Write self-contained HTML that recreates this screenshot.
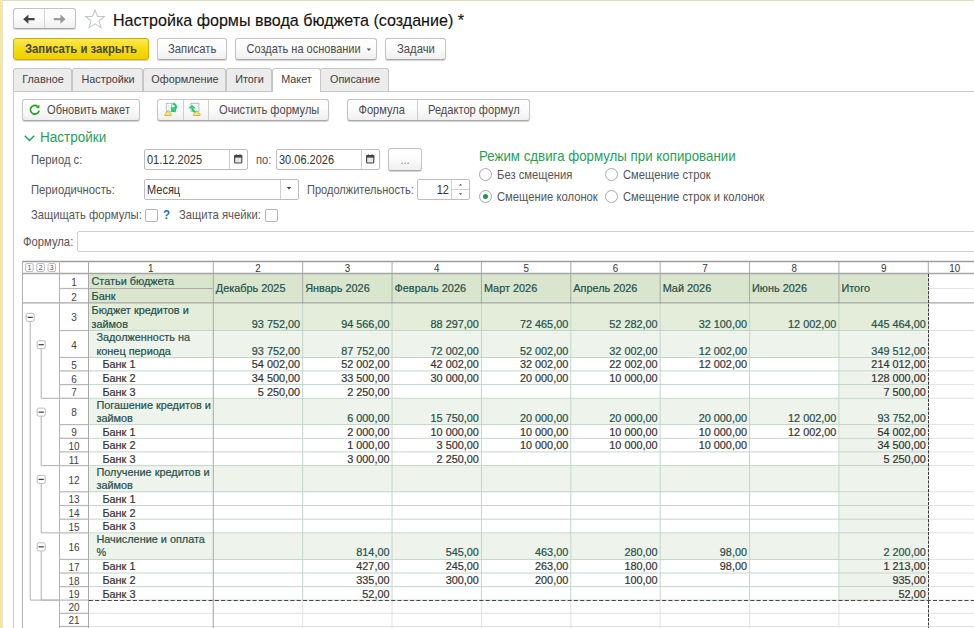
<!DOCTYPE html><html><head><meta charset="utf-8"><style>
*{margin:0;padding:0;box-sizing:border-box}
html,body{width:974px;height:628px;overflow:hidden;background:#fff}
body{position:relative;font-family:"Liberation Sans",sans-serif;font-size:11px;color:#333}
.a{position:absolute}
.t{position:absolute;white-space:nowrap;line-height:1;transform:scaleY(1.08);transform-origin:0 88%}
.btn{position:absolute;border:1px solid #c4c4c4;border-bottom-color:#a8a8a8;border-radius:3px;
 background:linear-gradient(#fff,#fcfcfc 45%,#efefef);box-shadow:0 1px 1px rgba(0,0,0,.18)}
.tab{position:absolute;top:68px;height:23px;border:1px solid #c6c6c6;border-bottom:none;border-radius:3px 3px 0 0;background:#ececec}
.fld{position:absolute;border:1px solid #bdbdbd;border-radius:2px;background:#fff}
.lbl{color:#555;font-size:11.25px}
.cb{position:absolute;width:13px;height:13px;border:1px solid #b4b4b4;border-radius:2px;background:#fff}
.rad{position:absolute;width:13px;height:13px;border:1px solid #a9a9a9;border-radius:50%;background:#fff}
</style></head><body>
<div class="a" style="left:0;top:0;width:974px;height:1px;background:#e6dcb8"></div>
<div class="a" style="left:0;top:0;width:2px;height:628px;background:#f6e8a0"></div>
<div class="a" style="left:2px;top:2px;width:1px;height:626px;background:#ece3c4"></div>
<div class="btn" style="left:13px;top:8px;width:63px;height:21px"></div>
<div class="a" style="left:44px;top:9px;width:1px;height:19px;background:#d4d4d4"></div>
<svg class="a" style="left:22px;top:13px" width="14" height="12" viewBox="0 0 14 12"><path d="M1.2 6.2 L6.4 1.6 L6.4 5.0 L12.6 5.0 L12.6 7.3 L6.4 7.3 L6.4 10.8 Z" fill="#444"/></svg>
<svg class="a" style="left:53px;top:13px" width="14" height="12" viewBox="0 0 14 12"><path d="M12.6 6.2 L7.4 1.6 L7.4 5.0 L0.8 5.0 L0.8 7.3 L7.4 7.3 L7.4 10.8 Z" fill="#9a9a9a"/></svg>
<svg class="a" style="left:84px;top:9px" width="22" height="20" viewBox="0 0 22 20"><path d="M11 1.2 L13.6 7.4 L20.3 7.6 L15 11.8 L17 18.6 L11 14.8 L5 18.6 L7 11.8 L1.7 7.6 L8.4 7.4 Z" fill="none" stroke="#c3c8cf" stroke-width="1.1" stroke-linejoin="miter"/></svg>
<div class="t" style="left:113px;top:12px;font-size:16.1px;color:#111;-webkit-text-stroke:0.12px #111;transform:none">Настройка формы ввода бюджета (создание) *</div>
<div class="a" style="left:13px;top:38px;width:136px;height:22px;border:1px solid #cfae00;border-radius:3px;background:linear-gradient(#fbe95a,#f6dc14 45%,#edd000);box-shadow:0 1px 1px rgba(0,0,0,.2)"></div>
<div class="t" style="left:25px;top:44px;font-size:11.3px;font-weight:bold;color:#454545">Записать и закрыть</div>
<div class="btn" style="left:157px;top:38px;width:70px;height:22px"></div>
<div class="t" style="left:168px;top:44px;color:#4a4a4a;font-size:11.3px">Записать</div>
<div class="btn" style="left:235px;top:38px;width:142px;height:22px"></div>
<div class="t" style="left:246.5px;top:44px;color:#4a4a4a;font-size:11px">Создать на основании</div>
<svg class="a" style="left:366px;top:48px" width="6" height="4" viewBox="0 0 6 4"><path d="M0.6 0.6 L5.0 0.6 L2.8 2.9 Z" fill="#555"/></svg>
<div class="btn" style="left:385px;top:38px;width:61px;height:22px"></div>
<div class="t" style="left:397px;top:44px;color:#4a4a4a;font-size:11.3px">Задачи</div>
<div class="a" style="left:13px;top:91px;width:961px;height:1px;background:#c8c8c8"></div>
<div class="a" style="left:13px;top:91px;width:1px;height:537px;background:#cfcfcf"></div>
<div class="tab" style="left:13px;width:59px"></div>
<div class="t" style="left:13px;width:60px;top:74px;text-align:center;color:#404040;font-size:10.85px">Главное</div>
<div class="tab" style="left:72px;width:71px"></div>
<div class="t" style="left:72px;width:72px;top:74px;text-align:center;color:#404040;font-size:10.85px">Настройки</div>
<div class="tab" style="left:143px;width:83px"></div>
<div class="t" style="left:143px;width:84px;top:74px;text-align:center;color:#404040;font-size:10.85px">Оформление</div>
<div class="tab" style="left:226px;width:46px"></div>
<div class="t" style="left:226px;width:47px;top:74px;text-align:center;color:#404040;font-size:10.85px">Итоги</div>
<div class="tab" style="left:320px;width:69px"></div>
<div class="t" style="left:320px;width:70px;top:74px;text-align:center;color:#404040;font-size:10.85px">Описание</div>
<div class="tab" style="left:272px;width:49px;background:#fff;height:24px"></div>
<div class="t" style="left:272px;width:49px;top:74px;text-align:center;color:#404040;font-size:10.85px">Макет</div>
<div class="btn" style="left:22px;top:99px;width:118px;height:22px"></div>
<svg class="a" style="left:26px;top:101px" width="18" height="18" viewBox="0 0 18 18"><path d="M13.1 9.6 A4.4 4.4 0 1 1 11.4 5.2" fill="none" stroke="#1e9e1e" stroke-width="1.6"/><path d="M10.0 6.6 L13.4 3.7 L13.3 7.4 Z" fill="#1e9e1e"/></svg>
<div class="t" style="left:47px;top:105px;color:#4a4a4a;font-size:11.1px">Обновить макет</div>
<div class="btn" style="left:157px;top:99px;width:172px;height:22px"></div>
<div class="a" style="left:183px;top:100px;width:1px;height:20px;background:#cfcfcf"></div>
<div class="a" style="left:208px;top:100px;width:1px;height:20px;background:#cfcfcf"></div>
<svg class="a" style="left:160px;top:100px" width="22" height="18" viewBox="0 0 22 18">
<rect x="6.3" y="3.3" width="5.4" height="8" fill="#fbfbfd" stroke="#a9b5c9" stroke-width="0.9"/>
<line x1="8.6" y1="5" x2="8.6" y2="10" stroke="#c8d0dc" stroke-width="0.8" stroke-dasharray="1,1"/>
<path d="M12.6 3.6 C15.6 3.8 16.4 6.5 15.6 8.0" fill="none" stroke="#1fcc66" stroke-width="2.2"/>
<path d="M10.6 7.4 L16.8 7.0 L15.6 12.3 L11.5 12.0 Z" fill="#1fcc66"/>
<path d="M12.3 8.6 L15.2 8.4 L14.3 11 Z" fill="#40f0a0" opacity=".7"/>
<path d="M4.6 15.2 Q4.6 14.6 5.2 14.0 L7.6 11.0 Q8.1 10.5 8.6 11.0 L11.2 14.0 Q11.8 14.8 11.2 15.4 L5.2 15.6 Q4.6 15.6 4.6 15.2 Z" fill="#f3e470" stroke="#ccaa2a" stroke-width="0.8"/>
</svg>
<svg class="a" style="left:184px;top:100px" width="22" height="18" viewBox="0 0 22 18">
<rect x="7.1" y="3.3" width="7.8" height="8" fill="#fbfbfd" stroke="#a9b5c9" stroke-width="0.9"/>
<line x1="11" y1="5" x2="11" y2="10" stroke="#c8d0dc" stroke-width="0.8" stroke-dasharray="1,1"/>
<path d="M4.3 8.3 L8.0 4.9 L11.8 8.3 L9.6 8.4 C9.8 9.8 10.6 10.8 12.2 11.2 L11.8 13.0 C9.4 12.9 7.8 11.2 7.6 8.6 Z" fill="#1fcc66"/>
<path d="M6.4 8.2 L8.0 6.6 L9.8 8.2 Z" fill="#40f0a0" opacity=".7"/>
<path d="M9.3 15.2 Q9.3 14.6 9.9 14.0 L12.3 11.2 Q12.8 10.7 13.3 11.2 L16.0 14.0 Q16.6 14.8 16.0 15.4 L9.9 15.6 Q9.3 15.6 9.3 15.2 Z" fill="#f3e470" stroke="#ccaa2a" stroke-width="0.8"/>
</svg>
<div class="t" style="left:219px;top:105px;color:#4a4a4a;font-size:11.1px">Очистить формулы</div>
<div class="btn" style="left:347px;top:99px;width:183px;height:22px"></div>
<div class="a" style="left:417px;top:100px;width:1px;height:20px;background:#cfcfcf"></div>
<div class="t" style="left:358.5px;top:105px;color:#4a4a4a;font-size:11.1px">Формула</div>
<div class="t" style="left:428px;top:105px;color:#4a4a4a;font-size:11.1px">Редактор формул</div>
<svg class="a" style="left:24px;top:135px" width="11" height="7" viewBox="0 0 11 7"><path d="M0.8 0.8 L5.5 5.5 L10.2 0.8" fill="none" stroke="#1fa05a" stroke-width="1.4"/></svg>
<div class="t" style="left:40px;top:130.5px;font-size:13.5px;color:#1fa05a">Настройки</div>
<div class="t lbl" style="left:31px;top:155px">Период с:</div>
<div class="fld" style="left:144px;top:149px;width:104px;height:21px"></div>
<div class="a" style="left:229px;top:150px;width:1px;height:19px;background:#cfcfcf"></div>
<div class="t" style="left:147px;top:155px;color:#333">01.12.2025</div>
<svg class="a" style="left:234px;top:154px" width="9" height="10" viewBox="0 0 9 10"><rect x="0.6" y="1.6" width="7.2" height="7.4" rx="1" fill="#e6e6e6" stroke="#444" stroke-width="1.1"/><rect x="0.2" y="1.2" width="8" height="2.4" fill="#444"/><rect x="1.7" y="0.3" width="1.2" height="1.5" fill="#444"/><rect x="5.5" y="0.3" width="1.2" height="1.5" fill="#444"/></svg>
<div class="t lbl" style="left:256px;top:155px">по:</div>
<div class="fld" style="left:276px;top:149px;width:104px;height:21px"></div>
<div class="a" style="left:361px;top:150px;width:1px;height:19px;background:#cfcfcf"></div>
<div class="t" style="left:279px;top:155px;color:#333">30.06.2026</div>
<svg class="a" style="left:366px;top:154px" width="9" height="10" viewBox="0 0 9 10"><rect x="0.6" y="1.6" width="7.2" height="7.4" rx="1" fill="#e6e6e6" stroke="#444" stroke-width="1.1"/><rect x="0.2" y="1.2" width="8" height="2.4" fill="#444"/><rect x="1.7" y="0.3" width="1.2" height="1.5" fill="#444"/><rect x="5.5" y="0.3" width="1.2" height="1.5" fill="#444"/></svg>
<div class="btn" style="left:388px;top:148px;width:34px;height:22.5px"></div>
<div class="t" style="left:388px;width:34px;top:155px;text-align:center;color:#888">...</div>
<div class="t lbl" style="left:31px;top:185px">Периодичность:</div>
<div class="fld" style="left:144px;top:179px;width:155px;height:21px"></div>
<div class="a" style="left:280px;top:180px;width:1px;height:19px;background:#cfcfcf"></div>
<div class="t" style="left:147px;top:185px;color:#333">Месяц</div>
<svg class="a" style="left:286px;top:186px" width="6" height="4" viewBox="0 0 6 4"><path d="M0.8 1 L5.2 1 L3 3.4 Z" fill="#333"/></svg>
<div class="t lbl" style="left:307px;top:185px;font-size:11.05px">Продолжительность:</div>
<div class="fld" style="left:417px;top:179px;width:53px;height:21px"></div>
<div class="a" style="left:451px;top:180px;width:1px;height:19px;background:#cfcfcf"></div>
<div class="a" style="left:452px;top:189px;width:17px;height:1px;background:#cfcfcf"></div>
<div class="t" style="left:417px;width:32px;top:185px;text-align:right;color:#333">12</div>
<svg class="a" style="left:458px;top:182px" width="5" height="5" viewBox="0 0 5 5"><path d="M1 3.6 L4 3.6 L2.5 1.8 Z" fill="#444"/></svg>
<svg class="a" style="left:458px;top:192px" width="5" height="5" viewBox="0 0 5 5"><path d="M1 1.2 L4 1.2 L2.5 3.0 Z" fill="#444"/></svg>
<div class="t" style="left:479px;top:149.5px;font-size:13.3px;color:#1fa05a">Режим сдвига формулы при копировании</div>
<div class="rad" style="left:479px;top:168px"></div>
<div class="t lbl" style="left:497px;top:170px">Без смещения</div>
<div class="rad" style="left:479px;top:190px"></div>
<div class="a" style="left:483px;top:194px;width:5px;height:5px;border-radius:50%;background:#1a9a4a"></div>
<div class="t lbl" style="left:497px;top:192px">Смещение колонок</div>
<div class="rad" style="left:605px;top:168px"></div>
<div class="t lbl" style="left:623px;top:170px">Смещение строк</div>
<div class="rad" style="left:605px;top:190px"></div>
<div class="t lbl" style="left:623px;top:192px">Смещение строк и колонок</div>
<div class="t lbl" style="left:31px;top:210px">Защищать формулы:</div>
<div class="cb" style="left:145px;top:209px"></div>
<div class="t" style="left:163px;top:210px;color:#1a6fb5;font-size:11.5px;font-weight:bold">?</div>
<div class="t lbl" style="left:179px;top:210px">Защита ячейки:</div>
<div class="cb" style="left:265px;top:209px"></div>
<div class="t lbl" style="left:23px;top:237px">Формула:</div>
<div class="fld" style="left:77px;top:231px;width:910px;height:21px;border-color:#d0d0d0"></div><svg class="a" style="left:0;top:0" width="974" height="628" viewBox="0 0 974 628" font-family="Liberation Sans, sans-serif"><rect x="88.80" y="274.00" width="839.00" height="29.30" fill="#d9e5cd"/><rect x="88.80" y="303.30" width="839.00" height="27.70" fill="#e3edda"/><rect x="88.80" y="331.00" width="839.00" height="27.00" fill="#eef3eb"/><rect x="839.42" y="358.00" width="88.38" height="13.40" fill="#eef3eb"/><rect x="839.42" y="371.40" width="88.38" height="13.70" fill="#eef3eb"/><rect x="839.42" y="385.10" width="88.38" height="13.70" fill="#eef3eb"/><rect x="88.80" y="398.80" width="839.00" height="26.30" fill="#eef3eb"/><rect x="839.42" y="425.10" width="88.38" height="13.70" fill="#eef3eb"/><rect x="839.42" y="438.80" width="88.38" height="13.60" fill="#eef3eb"/><rect x="839.42" y="452.40" width="88.38" height="13.70" fill="#eef3eb"/><rect x="88.80" y="466.10" width="839.00" height="26.20" fill="#eef3eb"/><rect x="839.42" y="492.30" width="88.38" height="13.70" fill="#eef3eb"/><rect x="839.42" y="506.00" width="88.38" height="13.70" fill="#eef3eb"/><rect x="839.42" y="519.70" width="88.38" height="13.70" fill="#eef3eb"/><rect x="88.80" y="533.40" width="839.00" height="26.50" fill="#eef3eb"/><rect x="839.42" y="559.90" width="88.38" height="13.60" fill="#eef3eb"/><rect x="839.42" y="573.50" width="88.38" height="13.60" fill="#eef3eb"/><rect x="839.42" y="587.10" width="88.38" height="13.50" fill="#eef3eb"/><line x1="87.80" y1="613.30" x2="974.00" y2="613.30" stroke="#e2e2e2" stroke-width="1"/><line x1="87.80" y1="626.50" x2="974.00" y2="626.50" stroke="#e2e2e2" stroke-width="1"/><line x1="87.80" y1="639.70" x2="974.00" y2="639.70" stroke="#e2e2e2" stroke-width="1"/><line x1="927.80" y1="330.50" x2="974.00" y2="330.50" stroke="#e2e2e2" stroke-width="1"/><line x1="927.80" y1="357.50" x2="974.00" y2="357.50" stroke="#e2e2e2" stroke-width="1"/><line x1="927.80" y1="370.90" x2="974.00" y2="370.90" stroke="#e2e2e2" stroke-width="1"/><line x1="927.80" y1="384.60" x2="974.00" y2="384.60" stroke="#e2e2e2" stroke-width="1"/><line x1="927.80" y1="398.30" x2="974.00" y2="398.30" stroke="#e2e2e2" stroke-width="1"/><line x1="927.80" y1="424.60" x2="974.00" y2="424.60" stroke="#e2e2e2" stroke-width="1"/><line x1="927.80" y1="438.30" x2="974.00" y2="438.30" stroke="#e2e2e2" stroke-width="1"/><line x1="927.80" y1="451.90" x2="974.00" y2="451.90" stroke="#e2e2e2" stroke-width="1"/><line x1="927.80" y1="465.60" x2="974.00" y2="465.60" stroke="#e2e2e2" stroke-width="1"/><line x1="927.80" y1="491.80" x2="974.00" y2="491.80" stroke="#e2e2e2" stroke-width="1"/><line x1="927.80" y1="505.50" x2="974.00" y2="505.50" stroke="#e2e2e2" stroke-width="1"/><line x1="927.80" y1="519.20" x2="974.00" y2="519.20" stroke="#e2e2e2" stroke-width="1"/><line x1="927.80" y1="532.90" x2="974.00" y2="532.90" stroke="#e2e2e2" stroke-width="1"/><line x1="927.80" y1="559.40" x2="974.00" y2="559.40" stroke="#e2e2e2" stroke-width="1"/><line x1="927.80" y1="573.00" x2="974.00" y2="573.00" stroke="#e2e2e2" stroke-width="1"/><line x1="927.80" y1="586.60" x2="974.00" y2="586.60" stroke="#e2e2e2" stroke-width="1"/><line x1="927.80" y1="600.10" x2="974.00" y2="600.10" stroke="#e2e2e2" stroke-width="1"/><line x1="927.80" y1="288.50" x2="974.00" y2="288.50" stroke="#e2e2e2" stroke-width="1"/><line x1="213.30" y1="599.60" x2="213.30" y2="628.00" stroke="#e2e2e2" stroke-width="1"/><line x1="302.68" y1="599.60" x2="302.68" y2="628.00" stroke="#e2e2e2" stroke-width="1"/><line x1="392.05" y1="599.60" x2="392.05" y2="628.00" stroke="#e2e2e2" stroke-width="1"/><line x1="481.43" y1="599.60" x2="481.43" y2="628.00" stroke="#e2e2e2" stroke-width="1"/><line x1="570.80" y1="599.60" x2="570.80" y2="628.00" stroke="#e2e2e2" stroke-width="1"/><line x1="660.17" y1="599.60" x2="660.17" y2="628.00" stroke="#e2e2e2" stroke-width="1"/><line x1="749.55" y1="599.60" x2="749.55" y2="628.00" stroke="#e2e2e2" stroke-width="1"/><line x1="838.92" y1="599.60" x2="838.92" y2="628.00" stroke="#e2e2e2" stroke-width="1"/><line x1="87.80" y1="330.50" x2="927.80" y2="330.50" stroke="#c2d7cb" stroke-width="1"/><line x1="87.80" y1="357.50" x2="927.80" y2="357.50" stroke="#c2d7cb" stroke-width="1"/><line x1="87.80" y1="370.90" x2="927.80" y2="370.90" stroke="#c2d7cb" stroke-width="1"/><line x1="87.80" y1="384.60" x2="927.80" y2="384.60" stroke="#c2d7cb" stroke-width="1"/><line x1="87.80" y1="398.30" x2="927.80" y2="398.30" stroke="#c2d7cb" stroke-width="1"/><line x1="87.80" y1="424.60" x2="927.80" y2="424.60" stroke="#c2d7cb" stroke-width="1"/><line x1="87.80" y1="438.30" x2="927.80" y2="438.30" stroke="#c2d7cb" stroke-width="1"/><line x1="87.80" y1="451.90" x2="927.80" y2="451.90" stroke="#c2d7cb" stroke-width="1"/><line x1="87.80" y1="465.60" x2="927.80" y2="465.60" stroke="#c2d7cb" stroke-width="1"/><line x1="87.80" y1="491.80" x2="927.80" y2="491.80" stroke="#c2d7cb" stroke-width="1"/><line x1="87.80" y1="505.50" x2="927.80" y2="505.50" stroke="#c2d7cb" stroke-width="1"/><line x1="87.80" y1="519.20" x2="927.80" y2="519.20" stroke="#c2d7cb" stroke-width="1"/><line x1="87.80" y1="532.90" x2="927.80" y2="532.90" stroke="#c2d7cb" stroke-width="1"/><line x1="87.80" y1="559.40" x2="927.80" y2="559.40" stroke="#c2d7cb" stroke-width="1"/><line x1="87.80" y1="573.00" x2="927.80" y2="573.00" stroke="#c2d7cb" stroke-width="1"/><line x1="87.80" y1="586.60" x2="927.80" y2="586.60" stroke="#c2d7cb" stroke-width="1"/><line x1="87.80" y1="600.10" x2="927.80" y2="600.10" stroke="#c2d7cb" stroke-width="1"/><line x1="302.68" y1="302.30" x2="302.68" y2="600.60" stroke="#c2d7cb" stroke-width="1"/><line x1="392.05" y1="302.30" x2="392.05" y2="600.60" stroke="#c2d7cb" stroke-width="1"/><line x1="481.43" y1="302.30" x2="481.43" y2="600.60" stroke="#c2d7cb" stroke-width="1"/><line x1="570.80" y1="302.30" x2="570.80" y2="600.60" stroke="#c2d7cb" stroke-width="1"/><line x1="660.17" y1="302.30" x2="660.17" y2="600.60" stroke="#c2d7cb" stroke-width="1"/><line x1="749.55" y1="302.30" x2="749.55" y2="600.60" stroke="#c2d7cb" stroke-width="1"/><line x1="838.92" y1="302.30" x2="838.92" y2="600.60" stroke="#c2d7cb" stroke-width="1"/><line x1="87.80" y1="288.50" x2="212.80" y2="288.50" stroke="#a9a9a9" stroke-width="1"/><line x1="213.30" y1="261.00" x2="213.30" y2="303.30" stroke="#a9a9a9" stroke-width="1"/><line x1="302.68" y1="261.00" x2="302.68" y2="303.30" stroke="#a9a9a9" stroke-width="1"/><line x1="392.05" y1="261.00" x2="392.05" y2="303.30" stroke="#a9a9a9" stroke-width="1"/><line x1="481.43" y1="261.00" x2="481.43" y2="303.30" stroke="#a9a9a9" stroke-width="1"/><line x1="570.80" y1="261.00" x2="570.80" y2="303.30" stroke="#a9a9a9" stroke-width="1"/><line x1="660.17" y1="261.00" x2="660.17" y2="303.30" stroke="#a9a9a9" stroke-width="1"/><line x1="749.55" y1="261.00" x2="749.55" y2="303.30" stroke="#a9a9a9" stroke-width="1"/><line x1="838.92" y1="261.00" x2="838.92" y2="303.30" stroke="#a9a9a9" stroke-width="1"/><line x1="928.30" y1="261.00" x2="928.30" y2="274.00" stroke="#a9a9a9" stroke-width="1"/><line x1="213.30" y1="302.30" x2="213.30" y2="628.00" stroke="#a9a9a9" stroke-width="1"/><line x1="22.00" y1="261.50" x2="974.00" y2="261.50" stroke="#9c9c9c" stroke-width="1.3"/><line x1="22.00" y1="273.50" x2="974.00" y2="273.50" stroke="#a6a6a6" stroke-width="1.3"/><line x1="22.00" y1="302.80" x2="974.00" y2="302.80" stroke="#a6a6a6" stroke-width="1.3"/><line x1="22.50" y1="261.00" x2="22.50" y2="628.00" stroke="#b0b0b0" stroke-width="1"/><line x1="59.50" y1="261.00" x2="59.50" y2="628.00" stroke="#b4b4b4" stroke-width="1"/><line x1="88.50" y1="261.00" x2="88.50" y2="628.00" stroke="#a9a9a9" stroke-width="1"/><line x1="59.00" y1="288.50" x2="88.00" y2="288.50" stroke="#b8b8b8" stroke-width="1.25"/><line x1="59.00" y1="330.50" x2="88.00" y2="330.50" stroke="#b8b8b8" stroke-width="1.25"/><line x1="59.00" y1="357.50" x2="88.00" y2="357.50" stroke="#b8b8b8" stroke-width="1.25"/><line x1="59.00" y1="370.90" x2="88.00" y2="370.90" stroke="#b8b8b8" stroke-width="1.25"/><line x1="59.00" y1="384.60" x2="88.00" y2="384.60" stroke="#b8b8b8" stroke-width="1.25"/><line x1="59.00" y1="398.30" x2="88.00" y2="398.30" stroke="#b8b8b8" stroke-width="1.25"/><line x1="59.00" y1="424.60" x2="88.00" y2="424.60" stroke="#b8b8b8" stroke-width="1.25"/><line x1="59.00" y1="438.30" x2="88.00" y2="438.30" stroke="#b8b8b8" stroke-width="1.25"/><line x1="59.00" y1="451.90" x2="88.00" y2="451.90" stroke="#b8b8b8" stroke-width="1.25"/><line x1="59.00" y1="465.60" x2="88.00" y2="465.60" stroke="#b8b8b8" stroke-width="1.25"/><line x1="59.00" y1="491.80" x2="88.00" y2="491.80" stroke="#b8b8b8" stroke-width="1.25"/><line x1="59.00" y1="505.50" x2="88.00" y2="505.50" stroke="#b8b8b8" stroke-width="1.25"/><line x1="59.00" y1="519.20" x2="88.00" y2="519.20" stroke="#b8b8b8" stroke-width="1.25"/><line x1="59.00" y1="532.90" x2="88.00" y2="532.90" stroke="#b8b8b8" stroke-width="1.25"/><line x1="59.00" y1="559.40" x2="88.00" y2="559.40" stroke="#b8b8b8" stroke-width="1.25"/><line x1="59.00" y1="573.00" x2="88.00" y2="573.00" stroke="#b8b8b8" stroke-width="1.25"/><line x1="59.00" y1="586.60" x2="88.00" y2="586.60" stroke="#b8b8b8" stroke-width="1.25"/><line x1="59.00" y1="600.10" x2="88.00" y2="600.10" stroke="#b8b8b8" stroke-width="1.25"/><line x1="59.00" y1="613.30" x2="88.00" y2="613.30" stroke="#b8b8b8" stroke-width="1.25"/><line x1="59.00" y1="626.50" x2="88.00" y2="626.50" stroke="#b8b8b8" stroke-width="1.25"/><line x1="59.00" y1="639.70" x2="88.00" y2="639.70" stroke="#b8b8b8" stroke-width="1.25"/><line x1="928.5" y1="274.00" x2="928.5" y2="628.00" stroke="#3a3a3a" stroke-width="1" stroke-dasharray="3.2,1.1"/><line x1="88.80" y1="600.5" x2="974.00" y2="600.5" stroke="#444" stroke-width="1" stroke-dasharray="4,2.3"/><rect x="26.20" y="313.35" width="8" height="8" rx="1.5" fill="#fff" stroke="#b8b8b8" stroke-width="1"/><line x1="27.60" y1="317.35" x2="32.80" y2="317.35" stroke="#3c3c3c" stroke-width="1.2"/><line x1="30.20" y1="321.85" x2="30.20" y2="600.10" stroke="#b0b0b0"/><line x1="30.20" y1="600.10" x2="59.00" y2="600.10" stroke="#b0b0b0" stroke-width="1"/><rect x="37.20" y="340.70" width="8" height="8" rx="1.5" fill="#fff" stroke="#b8b8b8" stroke-width="1"/><line x1="38.60" y1="344.70" x2="43.80" y2="344.70" stroke="#3c3c3c" stroke-width="1.2"/><line x1="41.20" y1="349.20" x2="41.20" y2="398.30" stroke="#b0b0b0"/><line x1="41.20" y1="398.30" x2="59.00" y2="398.30" stroke="#b0b0b0" stroke-width="1"/><rect x="37.20" y="408.15" width="8" height="8" rx="1.5" fill="#fff" stroke="#b8b8b8" stroke-width="1"/><line x1="38.60" y1="412.15" x2="43.80" y2="412.15" stroke="#3c3c3c" stroke-width="1.2"/><line x1="41.20" y1="416.65" x2="41.20" y2="465.60" stroke="#b0b0b0"/><line x1="41.20" y1="465.60" x2="59.00" y2="465.60" stroke="#b0b0b0" stroke-width="1"/><rect x="37.20" y="475.40" width="8" height="8" rx="1.5" fill="#fff" stroke="#b8b8b8" stroke-width="1"/><line x1="38.60" y1="479.40" x2="43.80" y2="479.40" stroke="#3c3c3c" stroke-width="1.2"/><line x1="41.20" y1="483.90" x2="41.20" y2="532.90" stroke="#b0b0b0"/><line x1="41.20" y1="532.90" x2="59.00" y2="532.90" stroke="#b0b0b0" stroke-width="1"/><rect x="37.20" y="542.85" width="8" height="8" rx="1.5" fill="#fff" stroke="#b8b8b8" stroke-width="1"/><line x1="38.60" y1="546.85" x2="43.80" y2="546.85" stroke="#3c3c3c" stroke-width="1.2"/><line x1="41.20" y1="551.35" x2="41.20" y2="600.10" stroke="#b0b0b0"/><line x1="41.20" y1="600.10" x2="59.00" y2="600.10" stroke="#b0b0b0" stroke-width="1"/><rect x="25.60" y="263.5" width="7.6" height="8" rx="1.5" fill="#fff" stroke="#b4b4b4" stroke-width="0.9"/><text x="29.40" y="270.2" font-size="7" text-anchor="middle" fill="#555">1</text><rect x="36.80" y="263.5" width="7.6" height="8" rx="1.5" fill="#fff" stroke="#b4b4b4" stroke-width="0.9"/><text x="40.60" y="270.2" font-size="7" text-anchor="middle" fill="#555">2</text><rect x="48.00" y="263.5" width="7.6" height="8" rx="1.5" fill="#fff" stroke="#b4b4b4" stroke-width="0.9"/><text x="51.80" y="270.2" font-size="7" text-anchor="middle" fill="#555">3</text><text transform="matrix(1,0,0,1.07,150.80,271.50)" font-size="9.8" fill="#333" stroke="#333" stroke-width="0" text-anchor="middle">1</text><text transform="matrix(1,0,0,1.07,257.99,271.50)" font-size="9.8" fill="#333" stroke="#333" stroke-width="0" text-anchor="middle">2</text><text transform="matrix(1,0,0,1.07,347.36,271.50)" font-size="9.8" fill="#333" stroke="#333" stroke-width="0" text-anchor="middle">3</text><text transform="matrix(1,0,0,1.07,436.74,271.50)" font-size="9.8" fill="#333" stroke="#333" stroke-width="0" text-anchor="middle">4</text><text transform="matrix(1,0,0,1.07,526.11,271.50)" font-size="9.8" fill="#333" stroke="#333" stroke-width="0" text-anchor="middle">5</text><text transform="matrix(1,0,0,1.07,615.49,271.50)" font-size="9.8" fill="#333" stroke="#333" stroke-width="0" text-anchor="middle">6</text><text transform="matrix(1,0,0,1.07,704.86,271.50)" font-size="9.8" fill="#333" stroke="#333" stroke-width="0" text-anchor="middle">7</text><text transform="matrix(1,0,0,1.07,794.24,271.50)" font-size="9.8" fill="#333" stroke="#333" stroke-width="0" text-anchor="middle">8</text><text transform="matrix(1,0,0,1.07,883.61,271.50)" font-size="9.8" fill="#333" stroke="#333" stroke-width="0" text-anchor="middle">9</text><text transform="matrix(1,0,0,1.07,954.80,271.50)" font-size="9.8" fill="#333" stroke="#333" stroke-width="0" text-anchor="middle">10</text><text transform="matrix(1,0,0,1.07,74.00,286.20)" font-size="10.0" fill="#404040" stroke="#404040" stroke-width="0" text-anchor="middle">1</text><text transform="matrix(1,0,0,1.07,74.00,300.50)" font-size="10.0" fill="#404040" stroke="#404040" stroke-width="0" text-anchor="middle">2</text><text transform="matrix(1,0,0,1.07,74.00,321.45)" font-size="10.0" fill="#404040" stroke="#404040" stroke-width="0" text-anchor="middle">3</text><text transform="matrix(1,0,0,1.07,74.00,348.80)" font-size="10.0" fill="#404040" stroke="#404040" stroke-width="0" text-anchor="middle">4</text><text transform="matrix(1,0,0,1.07,74.00,368.80)" font-size="10.0" fill="#404040" stroke="#404040" stroke-width="0" text-anchor="middle">5</text><text transform="matrix(1,0,0,1.07,74.00,382.50)" font-size="10.0" fill="#404040" stroke="#404040" stroke-width="0" text-anchor="middle">6</text><text transform="matrix(1,0,0,1.07,74.00,396.20)" font-size="10.0" fill="#404040" stroke="#404040" stroke-width="0" text-anchor="middle">7</text><text transform="matrix(1,0,0,1.07,74.00,416.25)" font-size="10.0" fill="#404040" stroke="#404040" stroke-width="0" text-anchor="middle">8</text><text transform="matrix(1,0,0,1.07,74.00,436.20)" font-size="10.0" fill="#404040" stroke="#404040" stroke-width="0" text-anchor="middle">9</text><text transform="matrix(1,0,0,1.07,74.00,449.80)" font-size="10.0" fill="#404040" stroke="#404040" stroke-width="0" text-anchor="middle">10</text><text transform="matrix(1,0,0,1.07,74.00,463.50)" font-size="10.0" fill="#404040" stroke="#404040" stroke-width="0" text-anchor="middle">11</text><text transform="matrix(1,0,0,1.07,74.00,483.50)" font-size="10.0" fill="#404040" stroke="#404040" stroke-width="0" text-anchor="middle">12</text><text transform="matrix(1,0,0,1.07,74.00,503.40)" font-size="10.0" fill="#404040" stroke="#404040" stroke-width="0" text-anchor="middle">13</text><text transform="matrix(1,0,0,1.07,74.00,517.10)" font-size="10.0" fill="#404040" stroke="#404040" stroke-width="0" text-anchor="middle">14</text><text transform="matrix(1,0,0,1.07,74.00,530.80)" font-size="10.0" fill="#404040" stroke="#404040" stroke-width="0" text-anchor="middle">15</text><text transform="matrix(1,0,0,1.07,74.00,550.95)" font-size="10.0" fill="#404040" stroke="#404040" stroke-width="0" text-anchor="middle">16</text><text transform="matrix(1,0,0,1.07,74.00,570.90)" font-size="10.0" fill="#404040" stroke="#404040" stroke-width="0" text-anchor="middle">17</text><text transform="matrix(1,0,0,1.07,74.00,584.50)" font-size="10.0" fill="#404040" stroke="#404040" stroke-width="0" text-anchor="middle">18</text><text transform="matrix(1,0,0,1.07,74.00,598.00)" font-size="10.0" fill="#404040" stroke="#404040" stroke-width="0" text-anchor="middle">19</text><text transform="matrix(1,0,0,1.07,74.00,611.20)" font-size="10.0" fill="#404040" stroke="#404040" stroke-width="0" text-anchor="middle">20</text><text transform="matrix(1,0,0,1.07,74.00,624.40)" font-size="10.0" fill="#404040" stroke="#404040" stroke-width="0" text-anchor="middle">21</text><text transform="matrix(1,0,0,1.07,91.50,285.40)" font-size="10.9" fill="#24504a" stroke="#24504a" stroke-width="0.2" text-anchor="start">Статьи бюджета</text><text transform="matrix(1,0,0,1.07,91.50,299.50)" font-size="10.9" fill="#24504a" stroke="#24504a" stroke-width="0.2" text-anchor="start">Банк</text><text transform="matrix(1,0,0,1.07,215.80,292.20)" font-size="10.9" fill="#24504a" stroke="#24504a" stroke-width="0.2" text-anchor="start">Декабрь 2025</text><text transform="matrix(1,0,0,1.07,305.18,292.20)" font-size="10.9" fill="#24504a" stroke="#24504a" stroke-width="0.2" text-anchor="start">Январь 2026</text><text transform="matrix(1,0,0,1.07,394.55,292.20)" font-size="10.9" fill="#24504a" stroke="#24504a" stroke-width="0.2" text-anchor="start">Февраль 2026</text><text transform="matrix(1,0,0,1.07,483.93,292.20)" font-size="10.9" fill="#24504a" stroke="#24504a" stroke-width="0.2" text-anchor="start">Март 2026</text><text transform="matrix(1,0,0,1.07,573.30,292.20)" font-size="10.9" fill="#24504a" stroke="#24504a" stroke-width="0.2" text-anchor="start">Апрель 2026</text><text transform="matrix(1,0,0,1.07,662.67,292.20)" font-size="10.9" fill="#24504a" stroke="#24504a" stroke-width="0.2" text-anchor="start">Май 2026</text><text transform="matrix(1,0,0,1.07,752.05,292.20)" font-size="10.9" fill="#24504a" stroke="#24504a" stroke-width="0.2" text-anchor="start">Июнь 2026</text><text transform="matrix(1,0,0,1.07,841.42,292.20)" font-size="10.9" fill="#24504a" stroke="#24504a" stroke-width="0.2" text-anchor="start">Итого</text><text transform="matrix(1,0,0,1.07,91.50,314.40)" font-size="10.9" fill="#24504a" stroke="#24504a" stroke-width="0.2" text-anchor="start">Бюджет кредитов и</text><text transform="matrix(1,0,0,1.07,91.50,327.50)" font-size="10.9" fill="#24504a" stroke="#24504a" stroke-width="0.2" text-anchor="start">займов</text><text transform="matrix(1,0,0,1.07,300.18,327.50)" font-size="10.9" fill="#24504a" stroke="#24504a" stroke-width="0.2" text-anchor="end">93 752,00</text><text transform="matrix(1,0,0,1.07,389.55,327.50)" font-size="10.9" fill="#24504a" stroke="#24504a" stroke-width="0.2" text-anchor="end">94 566,00</text><text transform="matrix(1,0,0,1.07,478.93,327.50)" font-size="10.9" fill="#24504a" stroke="#24504a" stroke-width="0.2" text-anchor="end">88 297,00</text><text transform="matrix(1,0,0,1.07,568.30,327.50)" font-size="10.9" fill="#24504a" stroke="#24504a" stroke-width="0.2" text-anchor="end">72 465,00</text><text transform="matrix(1,0,0,1.07,657.67,327.50)" font-size="10.9" fill="#24504a" stroke="#24504a" stroke-width="0.2" text-anchor="end">52 282,00</text><text transform="matrix(1,0,0,1.07,747.05,327.50)" font-size="10.9" fill="#24504a" stroke="#24504a" stroke-width="0.2" text-anchor="end">32 100,00</text><text transform="matrix(1,0,0,1.07,836.42,327.50)" font-size="10.9" fill="#24504a" stroke="#24504a" stroke-width="0.2" text-anchor="end">12 002,00</text><text transform="matrix(1,0,0,1.07,925.80,327.50)" font-size="10.9" fill="#24504a" stroke="#24504a" stroke-width="0.2" text-anchor="end">445 464,00</text><text transform="matrix(1,0,0,1.07,96.40,341.40)" font-size="10.9" fill="#24504a" stroke="#24504a" stroke-width="0.2" text-anchor="start">Задолженность на</text><text transform="matrix(1,0,0,1.07,96.40,354.50)" font-size="10.9" fill="#24504a" stroke="#24504a" stroke-width="0.2" text-anchor="start">конец периода</text><text transform="matrix(1,0,0,1.07,300.18,354.50)" font-size="10.9" fill="#24504a" stroke="#24504a" stroke-width="0.2" text-anchor="end">93 752,00</text><text transform="matrix(1,0,0,1.07,389.55,354.50)" font-size="10.9" fill="#24504a" stroke="#24504a" stroke-width="0.2" text-anchor="end">87 752,00</text><text transform="matrix(1,0,0,1.07,478.93,354.50)" font-size="10.9" fill="#24504a" stroke="#24504a" stroke-width="0.2" text-anchor="end">72 002,00</text><text transform="matrix(1,0,0,1.07,568.30,354.50)" font-size="10.9" fill="#24504a" stroke="#24504a" stroke-width="0.2" text-anchor="end">52 002,00</text><text transform="matrix(1,0,0,1.07,657.67,354.50)" font-size="10.9" fill="#24504a" stroke="#24504a" stroke-width="0.2" text-anchor="end">32 002,00</text><text transform="matrix(1,0,0,1.07,747.05,354.50)" font-size="10.9" fill="#24504a" stroke="#24504a" stroke-width="0.2" text-anchor="end">12 002,00</text><text transform="matrix(1,0,0,1.07,925.80,354.50)" font-size="10.9" fill="#24504a" stroke="#24504a" stroke-width="0.2" text-anchor="end">349 512,00</text><text transform="matrix(1,0,0,1.07,102.40,368.30)" font-size="10.9" fill="#333333" stroke="#333333" stroke-width="0.2" text-anchor="start">Банк 1</text><text transform="matrix(1,0,0,1.07,300.18,368.30)" font-size="10.9" fill="#333333" stroke="#333333" stroke-width="0.2" text-anchor="end">54 002,00</text><text transform="matrix(1,0,0,1.07,389.55,368.30)" font-size="10.9" fill="#333333" stroke="#333333" stroke-width="0.2" text-anchor="end">52 002,00</text><text transform="matrix(1,0,0,1.07,478.93,368.30)" font-size="10.9" fill="#333333" stroke="#333333" stroke-width="0.2" text-anchor="end">42 002,00</text><text transform="matrix(1,0,0,1.07,568.30,368.30)" font-size="10.9" fill="#333333" stroke="#333333" stroke-width="0.2" text-anchor="end">32 002,00</text><text transform="matrix(1,0,0,1.07,657.67,368.30)" font-size="10.9" fill="#333333" stroke="#333333" stroke-width="0.2" text-anchor="end">22 002,00</text><text transform="matrix(1,0,0,1.07,747.05,368.30)" font-size="10.9" fill="#333333" stroke="#333333" stroke-width="0.2" text-anchor="end">12 002,00</text><text transform="matrix(1,0,0,1.07,925.80,368.30)" font-size="10.9" fill="#333333" stroke="#333333" stroke-width="0.2" text-anchor="end">214 012,00</text><text transform="matrix(1,0,0,1.07,102.40,382.00)" font-size="10.9" fill="#333333" stroke="#333333" stroke-width="0.2" text-anchor="start">Банк 2</text><text transform="matrix(1,0,0,1.07,300.18,382.00)" font-size="10.9" fill="#333333" stroke="#333333" stroke-width="0.2" text-anchor="end">34 500,00</text><text transform="matrix(1,0,0,1.07,389.55,382.00)" font-size="10.9" fill="#333333" stroke="#333333" stroke-width="0.2" text-anchor="end">33 500,00</text><text transform="matrix(1,0,0,1.07,478.93,382.00)" font-size="10.9" fill="#333333" stroke="#333333" stroke-width="0.2" text-anchor="end">30 000,00</text><text transform="matrix(1,0,0,1.07,568.30,382.00)" font-size="10.9" fill="#333333" stroke="#333333" stroke-width="0.2" text-anchor="end">20 000,00</text><text transform="matrix(1,0,0,1.07,657.67,382.00)" font-size="10.9" fill="#333333" stroke="#333333" stroke-width="0.2" text-anchor="end">10 000,00</text><text transform="matrix(1,0,0,1.07,925.80,382.00)" font-size="10.9" fill="#333333" stroke="#333333" stroke-width="0.2" text-anchor="end">128 000,00</text><text transform="matrix(1,0,0,1.07,102.40,395.70)" font-size="10.9" fill="#333333" stroke="#333333" stroke-width="0.2" text-anchor="start">Банк 3</text><text transform="matrix(1,0,0,1.07,300.18,395.70)" font-size="10.9" fill="#333333" stroke="#333333" stroke-width="0.2" text-anchor="end">5 250,00</text><text transform="matrix(1,0,0,1.07,389.55,395.70)" font-size="10.9" fill="#333333" stroke="#333333" stroke-width="0.2" text-anchor="end">2 250,00</text><text transform="matrix(1,0,0,1.07,925.80,395.70)" font-size="10.9" fill="#333333" stroke="#333333" stroke-width="0.2" text-anchor="end">7 500,00</text><text transform="matrix(1,0,0,1.07,96.40,408.50)" font-size="10.9" fill="#24504a" stroke="#24504a" stroke-width="0.2" text-anchor="start">Погашение кредитов и</text><text transform="matrix(1,0,0,1.07,96.40,421.60)" font-size="10.9" fill="#24504a" stroke="#24504a" stroke-width="0.2" text-anchor="start">займов</text><text transform="matrix(1,0,0,1.07,389.55,421.60)" font-size="10.9" fill="#24504a" stroke="#24504a" stroke-width="0.2" text-anchor="end">6 000,00</text><text transform="matrix(1,0,0,1.07,478.93,421.60)" font-size="10.9" fill="#24504a" stroke="#24504a" stroke-width="0.2" text-anchor="end">15 750,00</text><text transform="matrix(1,0,0,1.07,568.30,421.60)" font-size="10.9" fill="#24504a" stroke="#24504a" stroke-width="0.2" text-anchor="end">20 000,00</text><text transform="matrix(1,0,0,1.07,657.67,421.60)" font-size="10.9" fill="#24504a" stroke="#24504a" stroke-width="0.2" text-anchor="end">20 000,00</text><text transform="matrix(1,0,0,1.07,747.05,421.60)" font-size="10.9" fill="#24504a" stroke="#24504a" stroke-width="0.2" text-anchor="end">20 000,00</text><text transform="matrix(1,0,0,1.07,836.42,421.60)" font-size="10.9" fill="#24504a" stroke="#24504a" stroke-width="0.2" text-anchor="end">12 002,00</text><text transform="matrix(1,0,0,1.07,925.80,421.60)" font-size="10.9" fill="#24504a" stroke="#24504a" stroke-width="0.2" text-anchor="end">93 752,00</text><text transform="matrix(1,0,0,1.07,102.40,435.70)" font-size="10.9" fill="#333333" stroke="#333333" stroke-width="0.2" text-anchor="start">Банк 1</text><text transform="matrix(1,0,0,1.07,389.55,435.70)" font-size="10.9" fill="#333333" stroke="#333333" stroke-width="0.2" text-anchor="end">2 000,00</text><text transform="matrix(1,0,0,1.07,478.93,435.70)" font-size="10.9" fill="#333333" stroke="#333333" stroke-width="0.2" text-anchor="end">10 000,00</text><text transform="matrix(1,0,0,1.07,568.30,435.70)" font-size="10.9" fill="#333333" stroke="#333333" stroke-width="0.2" text-anchor="end">10 000,00</text><text transform="matrix(1,0,0,1.07,657.67,435.70)" font-size="10.9" fill="#333333" stroke="#333333" stroke-width="0.2" text-anchor="end">10 000,00</text><text transform="matrix(1,0,0,1.07,747.05,435.70)" font-size="10.9" fill="#333333" stroke="#333333" stroke-width="0.2" text-anchor="end">10 000,00</text><text transform="matrix(1,0,0,1.07,836.42,435.70)" font-size="10.9" fill="#333333" stroke="#333333" stroke-width="0.2" text-anchor="end">12 002,00</text><text transform="matrix(1,0,0,1.07,925.80,435.70)" font-size="10.9" fill="#333333" stroke="#333333" stroke-width="0.2" text-anchor="end">54 002,00</text><text transform="matrix(1,0,0,1.07,102.40,449.30)" font-size="10.9" fill="#333333" stroke="#333333" stroke-width="0.2" text-anchor="start">Банк 2</text><text transform="matrix(1,0,0,1.07,389.55,449.30)" font-size="10.9" fill="#333333" stroke="#333333" stroke-width="0.2" text-anchor="end">1 000,00</text><text transform="matrix(1,0,0,1.07,478.93,449.30)" font-size="10.9" fill="#333333" stroke="#333333" stroke-width="0.2" text-anchor="end">3 500,00</text><text transform="matrix(1,0,0,1.07,568.30,449.30)" font-size="10.9" fill="#333333" stroke="#333333" stroke-width="0.2" text-anchor="end">10 000,00</text><text transform="matrix(1,0,0,1.07,657.67,449.30)" font-size="10.9" fill="#333333" stroke="#333333" stroke-width="0.2" text-anchor="end">10 000,00</text><text transform="matrix(1,0,0,1.07,747.05,449.30)" font-size="10.9" fill="#333333" stroke="#333333" stroke-width="0.2" text-anchor="end">10 000,00</text><text transform="matrix(1,0,0,1.07,925.80,449.30)" font-size="10.9" fill="#333333" stroke="#333333" stroke-width="0.2" text-anchor="end">34 500,00</text><text transform="matrix(1,0,0,1.07,102.40,463.00)" font-size="10.9" fill="#333333" stroke="#333333" stroke-width="0.2" text-anchor="start">Банк 3</text><text transform="matrix(1,0,0,1.07,389.55,463.00)" font-size="10.9" fill="#333333" stroke="#333333" stroke-width="0.2" text-anchor="end">3 000,00</text><text transform="matrix(1,0,0,1.07,478.93,463.00)" font-size="10.9" fill="#333333" stroke="#333333" stroke-width="0.2" text-anchor="end">2 250,00</text><text transform="matrix(1,0,0,1.07,925.80,463.00)" font-size="10.9" fill="#333333" stroke="#333333" stroke-width="0.2" text-anchor="end">5 250,00</text><text transform="matrix(1,0,0,1.07,96.40,475.70)" font-size="10.9" fill="#24504a" stroke="#24504a" stroke-width="0.2" text-anchor="start">Получение кредитов и</text><text transform="matrix(1,0,0,1.07,96.40,488.80)" font-size="10.9" fill="#24504a" stroke="#24504a" stroke-width="0.2" text-anchor="start">займов</text><text transform="matrix(1,0,0,1.07,102.40,502.90)" font-size="10.9" fill="#333333" stroke="#333333" stroke-width="0.2" text-anchor="start">Банк 1</text><text transform="matrix(1,0,0,1.07,102.40,516.60)" font-size="10.9" fill="#333333" stroke="#333333" stroke-width="0.2" text-anchor="start">Банк 2</text><text transform="matrix(1,0,0,1.07,102.40,530.30)" font-size="10.9" fill="#333333" stroke="#333333" stroke-width="0.2" text-anchor="start">Банк 3</text><text transform="matrix(1,0,0,1.07,96.40,543.30)" font-size="10.9" fill="#24504a" stroke="#24504a" stroke-width="0.2" text-anchor="start">Начисление и оплата</text><text transform="matrix(1,0,0,1.07,96.40,556.40)" font-size="10.9" fill="#24504a" stroke="#24504a" stroke-width="0.2" text-anchor="start">%</text><text transform="matrix(1,0,0,1.07,389.55,556.40)" font-size="10.9" fill="#24504a" stroke="#24504a" stroke-width="0.2" text-anchor="end">814,00</text><text transform="matrix(1,0,0,1.07,478.93,556.40)" font-size="10.9" fill="#24504a" stroke="#24504a" stroke-width="0.2" text-anchor="end">545,00</text><text transform="matrix(1,0,0,1.07,568.30,556.40)" font-size="10.9" fill="#24504a" stroke="#24504a" stroke-width="0.2" text-anchor="end">463,00</text><text transform="matrix(1,0,0,1.07,657.67,556.40)" font-size="10.9" fill="#24504a" stroke="#24504a" stroke-width="0.2" text-anchor="end">280,00</text><text transform="matrix(1,0,0,1.07,747.05,556.40)" font-size="10.9" fill="#24504a" stroke="#24504a" stroke-width="0.2" text-anchor="end">98,00</text><text transform="matrix(1,0,0,1.07,925.80,556.40)" font-size="10.9" fill="#24504a" stroke="#24504a" stroke-width="0.2" text-anchor="end">2 200,00</text><text transform="matrix(1,0,0,1.07,102.40,570.40)" font-size="10.9" fill="#333333" stroke="#333333" stroke-width="0.2" text-anchor="start">Банк 1</text><text transform="matrix(1,0,0,1.07,389.55,570.40)" font-size="10.9" fill="#333333" stroke="#333333" stroke-width="0.2" text-anchor="end">427,00</text><text transform="matrix(1,0,0,1.07,478.93,570.40)" font-size="10.9" fill="#333333" stroke="#333333" stroke-width="0.2" text-anchor="end">245,00</text><text transform="matrix(1,0,0,1.07,568.30,570.40)" font-size="10.9" fill="#333333" stroke="#333333" stroke-width="0.2" text-anchor="end">263,00</text><text transform="matrix(1,0,0,1.07,657.67,570.40)" font-size="10.9" fill="#333333" stroke="#333333" stroke-width="0.2" text-anchor="end">180,00</text><text transform="matrix(1,0,0,1.07,747.05,570.40)" font-size="10.9" fill="#333333" stroke="#333333" stroke-width="0.2" text-anchor="end">98,00</text><text transform="matrix(1,0,0,1.07,925.80,570.40)" font-size="10.9" fill="#333333" stroke="#333333" stroke-width="0.2" text-anchor="end">1 213,00</text><text transform="matrix(1,0,0,1.07,102.40,584.00)" font-size="10.9" fill="#333333" stroke="#333333" stroke-width="0.2" text-anchor="start">Банк 2</text><text transform="matrix(1,0,0,1.07,389.55,584.00)" font-size="10.9" fill="#333333" stroke="#333333" stroke-width="0.2" text-anchor="end">335,00</text><text transform="matrix(1,0,0,1.07,478.93,584.00)" font-size="10.9" fill="#333333" stroke="#333333" stroke-width="0.2" text-anchor="end">300,00</text><text transform="matrix(1,0,0,1.07,568.30,584.00)" font-size="10.9" fill="#333333" stroke="#333333" stroke-width="0.2" text-anchor="end">200,00</text><text transform="matrix(1,0,0,1.07,657.67,584.00)" font-size="10.9" fill="#333333" stroke="#333333" stroke-width="0.2" text-anchor="end">100,00</text><text transform="matrix(1,0,0,1.07,925.80,584.00)" font-size="10.9" fill="#333333" stroke="#333333" stroke-width="0.2" text-anchor="end">935,00</text><text transform="matrix(1,0,0,1.07,102.40,597.50)" font-size="10.9" fill="#333333" stroke="#333333" stroke-width="0.2" text-anchor="start">Банк 3</text><text transform="matrix(1,0,0,1.07,389.55,597.50)" font-size="10.9" fill="#333333" stroke="#333333" stroke-width="0.2" text-anchor="end">52,00</text><text transform="matrix(1,0,0,1.07,925.80,597.50)" font-size="10.9" fill="#333333" stroke="#333333" stroke-width="0.2" text-anchor="end">52,00</text></svg></body></html>
